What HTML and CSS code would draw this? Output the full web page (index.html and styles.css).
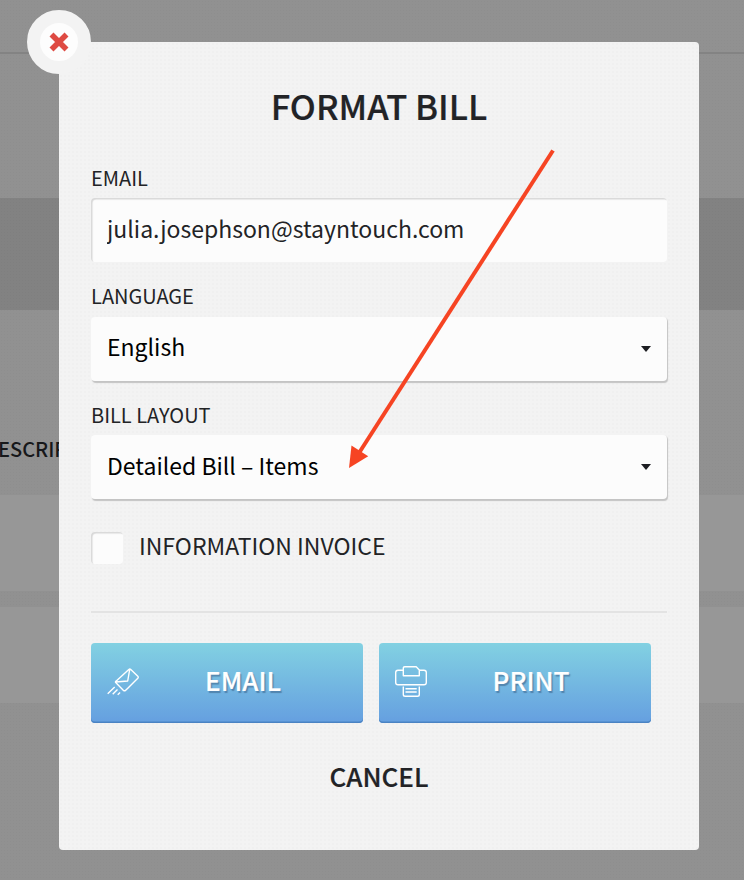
FILE: index.html
```
<!DOCTYPE html>
<html lang="en">
<head>
    <meta charset="UTF-8">
    <meta name="viewport" content="width=device-width, initial-scale=1.0">
    <title>Format Bill</title>
    <link rel="stylesheet" href="styles.css">
</head>
<body>
    <!-- Dimmed page behind the modal -->
    <div class="page">
        <div class="page-header"></div>
        <div class="page-info"></div>
        <div class="page-tabs"></div>
        <div class="page-heading">DESCRIPTION</div>
        <div class="page-row"></div>
        <div class="page-row"></div>
    </div>

    <div class="modal">
        <button type="button" class="close-btn" aria-label="Close">
            <svg width="20" height="20" viewBox="0 0 20 20"><path d="M2.5 2.5L17.5 17.5M17.5 2.5L2.5 17.5"/></svg>
        </button>

        <h1>FORMAT BILL</h1>

        <form id="format-form">
            <div class="form-group">
                <label for="email">EMAIL</label>
                <input type="text" id="email" class="text-input" name="email" value="julia.josephson@stayntouch.com">
            </div>
            <div class="form-group">
                <label for="language">LANGUAGE</label>
                <div id="language" class="select"><span>English</span><i class="caret"></i></div>
            </div>
            <div class="form-group">
                <label for="layout">BILL LAYOUT</label>
                <div id="layout" class="select"><span>Detailed Bill – Items</span><i class="caret"></i></div>
            </div>

            <div class="check-row">
                <span class="checkbox"></span>
                <span class="check-text">INFORMATION INVOICE</span>
            </div>

            <div class="actions">
                <button type="button" class="btn">
                    <svg class="btn-icon" width="32" height="32" viewBox="0 0 32 32">
                        <path d="M9 15.2L21.8 3.4q1-.9 2 0l7 6.8q.9 1 0 2L18.5 24.4q-1 .9-2 0L8.7 16.6q-.6-.8.3-1.4zM22.8 3l-2.1 12L8.8 16"/>
                        <path d="M.7 27.8l7-6.8M5.7 28.2l4.8-4.8M10.7 28.7l2.4-2.2"/>
                    </svg>
                    <span>EMAIL</span>
                </button>
                <button type="button" class="btn">
                    <svg class="btn-icon" width="32" height="32" viewBox="0 0 32 32">
                        <path d="M8.3 4.2H3q-2.3 0-2.3 2.3v10q0 2.3 2.3 2.3h26q2.3 0 2.3-2.3v-10q0-2.3-2.3-2.3h-4.7"/>
                        <path d="M9.8.7h11.4l3.1 3.2v5.8h-16V2.2q0-1.5 1.5-1.5z"/>
                        <path d="M8.3 20.5v8q0 1.8 1.8 1.8h12.4q1.8 0 1.8-1.8v-8M10.5 22.8h11.2M10.5 26h11.2"/>
                    </svg>
                    <span>PRINT</span>
                </button>
            </div>
            <button type="button" class="cancel">CANCEL</button>
        </form>
    </div>

    <!-- Arrow pointing at the bill layout field -->
    <svg class="arrow" width="744" height="880" viewBox="0 0 744 880">
        <path class="arrow-line" d="M553 150.5L359 453"/>
        <path class="arrow-head" d="M349 468L351.5 445.5L368.2 456.3z"/>
    </svg>
</body>
</html>
```

FILE: styles.css
```
* {
    box-sizing: border-box;
}
body {
    margin: 0;
    height: 880px;
    overflow: hidden;
    position: relative;
    font-family: "Noto Sans CJK SC", "Noto Sans", sans-serif;
    color: #222326;
}
button, input {
    font-family: inherit;
    color: inherit;
    border: none;
    padding: 0;
}

/* background page */
.page {
    height: 880px;
    background-color: #919191;
    background-image: radial-gradient(rgba(0,0,0,0.025) 0.6px, transparent 0.9px);
    background-size: 3px 3px;
}
.page-header {
    height: 54px;
    border-bottom: 2px solid #838383;
}
.page-info {
    height: 144px;
}
.page-tabs {
    height: 112px;
    background: rgba(0,0,0,0.1);
}
.page-heading {
    height: 185px;
    padding: 124px 0 0;
    margin-left: -16px;
    font-size: 20px;
    line-height: 30px;
    font-weight: 500;
    color: #17181a;
}
.page-row {
    height: 96px;
    margin-bottom: 16px;
    background: #979797;
}

/* modal */
.modal {
    position: absolute;
    left: 59px;
    top: 41.5px;
    width: 640px;
    height: 808.5px;
    padding: 32px 32px 0;
    border-radius: 4px;
    background-color: #f3f3f3;
    background-image: radial-gradient(rgba(0,0,0,0.02) 0.6px, transparent 0.9px);
    background-size: 4px 4px;
}
.close-btn {
    position: absolute;
    left: -32px;
    top: -32px;
    width: 64px;
    height: 64px;
    border-radius: 50%;
    border: 13px solid #f3f3f3;
    background: #fdfdfd;
    display: flex;
    align-items: center;
    justify-content: center;
}
.close-btn path {
    stroke: #de4a42;
    stroke-width: 5.6;
    fill: none;
}
h1 {
    margin: 0 0 26px;
    height: 66px;
    line-height: 62px;
    font-size: 34.5px;
    font-weight: 500;
    text-align: center;
    -webkit-text-stroke: 0.2px #222326;
}
.form-group {
    margin-bottom: 22px;
}
label {
    display: block;
    height: 24px;
    line-height: 23px;
    margin-bottom: 8.5px;
    font-size: 20px;
}
.text-input, .select {
    display: flex;
    align-items: center;
    justify-content: space-between;
    width: 576px;
    height: 64px;
    padding: 0 16px;
    border-radius: 4px;
    background: #fcfcfc;
    font-size: 23px;
}
.text-input {
    padding-bottom: 4px;
    box-shadow: inset 1.5px 1.5px 1px #d8d8d8;
}
.select {
    color: #000;
    box-shadow: 1px 1.5px 1px #c4c4c4;
}
.select span {
    padding-bottom: 5px;
}
.caret {
    border: 5px solid transparent;
    border-top: 6px solid #1d1e22;
    border-bottom: 0;
}
.check-row {
    display: flex;
    align-items: center;
    gap: 16px;
    height: 32px;
    margin-top: 32.5px;
    font-size: 23px;
}
.check-text {
    padding-bottom: 6px;
}
.checkbox {
    width: 32px;
    height: 32px;
    border-radius: 4px;
    background: #fcfcfc;
    box-shadow: inset 1.5px 1.5px 1px #d8d8d8;
}
.actions {
    display: flex;
    gap: 16px;
    margin-top: 47px;
    padding-top: 30px;
    border-top: 2px solid #e3e3e3;
}
.btn {
    display: flex;
    align-items: center;
    width: 272px;
    height: 80px;
    padding: 0 16px 2px;
    border-radius: 4px;
    background: linear-gradient(#82d1e2, #659fe0);
    box-shadow: inset 0 -1.5px 0 #4a83c3;
    color: #fff;
    font-size: 26px;
    font-weight: 500;
    text-shadow: 1.5px 1.5px 1px rgba(60,100,140,0.6);
    -webkit-text-stroke: 0.2px #fff;
}
.btn span {
    flex: 1;
    padding-bottom: 5px;
    text-align: center;
}
.btn-icon {
    fill: none;
    stroke: #fff;
    stroke-width: 1.4;
    stroke-linejoin: round;
}
.cancel {
    display: block;
    width: 576px;
    height: 60px;
    margin-top: 23px;
    background: none;
    font-size: 26px;
    font-weight: 500;
    text-align: center;
    -webkit-text-stroke: 0.2px #222326;
}

/* pointer arrow */
.arrow {
    position: absolute;
    left: 0;
    top: 0;
    pointer-events: none;
}
.arrow-line {
    stroke: #f64423;
    stroke-width: 4;
}
.arrow-head {
    fill: #f64423;
}
```
